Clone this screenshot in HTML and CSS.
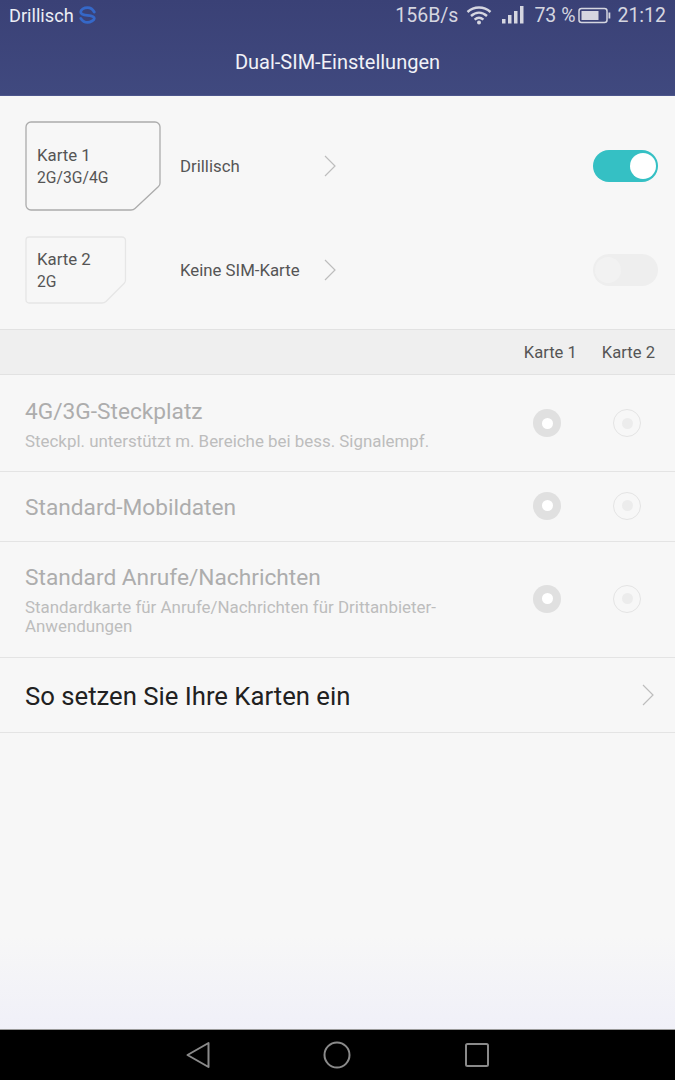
FILE: index.html
```html
<!DOCTYPE html>
<html lang="de">
<head>
<meta charset="utf-8">
<title>Dual-SIM-Einstellungen</title>
<link rel="stylesheet" href="styles.css">
</head>
<body>
<div class="screen">
  <header class="appbar">
    <div class="status">
      <div class="status-left">
        <span class="carrier">Drillisch</span>
        <svg class="s-logo" width="17" height="18" viewBox="0 0 17 18"><path d="M15.200 6 C13.800 3.200 11 1.600 8.500 1.600 C5 1.600 1.700 3.400 1.700 6 C1.700 8.500 5 9 8.500 9.400 C12 9.800 15.300 10.200 15.300 12.400 C15.300 14 11.500 16.400 8.500 16.400 C6 16.400 3.500 15 1.800 12.400" fill="none" stroke="#3568c8" stroke-width="2.800" stroke-linecap="round" stroke-linejoin="round"/></svg>
      </div>
      <div class="status-right">
        <span class="speed">156B/s</span>
        <svg class="wifi" width="26" height="20" viewBox="0 0 26 20"><g fill="none" stroke="#d5d6e0" stroke-width="2.400"><path d="M1.500 7 C8 1 18 1 24.500 7"/><path d="M5 11 C10 6.500 16 6.500 21 11"/><path d="M8.600 14.600 C11.500 12 14.500 12 17.400 14.600"/></g><circle cx="13" cy="17.500" r="2" fill="#d5d6e0"/></svg>
        <svg class="signal" width="22" height="18" viewBox="0 0 22 18"><g fill="#d5d6e0"><rect x="0" y="13" width="3.500" height="4.500"/><rect x="6" y="9" width="3.500" height="8.500"/><rect x="12" y="5" width="3.500" height="12.500"/><rect x="18" y="0" width="3.500" height="17.500"/></g></svg>
        <span class="pct">73 %</span>
        <svg class="battery" width="33" height="17" viewBox="0 0 33 17"><rect x="1" y="1.500" width="28" height="14" rx="2.500" fill="none" stroke="#d5d6e0" stroke-width="1.500"/><rect x="3.500" y="4" width="17" height="9" fill="#d5d6e0"/><rect x="30.500" y="5.500" width="1.800" height="6" fill="#d5d6e0"/></svg>
        <span class="time">21:12</span>
      </div>
    </div>
    <h1 class="title">Dual-SIM-Einstellungen</h1>
  </header>

  <main class="content">
    <section class="sims">
      <div class="sim-row sim-row-first">
        <div class="sim-slot">
          <svg class="sim-shape" width="136" height="90" viewBox="0 0 136 90"><path d="M6 1 H130 A5 5 0 0 1 135 6 V62 Q135 64 133.500 65.500 L110 87.500 Q108.500 89 106 89 H6 A5 5 0 0 1 1 84 V6 A5 5 0 0 1 6 1 Z" fill="none" stroke="#acacac" stroke-width="1.300"/></svg>
          <div class="sim-text"><div class="sim-name">Karte 1</div><div class="sim-net">2G/3G/4G</div></div>
        </div>
        <span class="sim-carrier">Drillisch</span>
        <svg class="chev" width="14" height="22" viewBox="0 0 14 22"><path d="M2 1 L12 11 L2 21" fill="none" stroke="#bdbdbd" stroke-width="1.200"/></svg>
        <div class="toggle toggle-on"><span class="knob"></span></div>
      </div>
      <div class="sim-row sim-row-second">
        <div class="sim-slot">
          <svg class="sim-shape" width="102" height="68" viewBox="0 0 102 68"><path d="M4 1 H97 A3.500 3.500 0 0 1 100.500 4.500 V44 Q100.500 46 99 47.500 L81 65.500 Q79.500 67 77 67 H4 A3 3 0 0 1 1 64 V4 A3 3 0 0 1 4 1 Z" fill="none" stroke="#e6e6e6" stroke-width="1.300"/></svg>
          <div class="sim-text"><div class="sim-name">Karte 2</div><div class="sim-net">2G</div></div>
        </div>
        <span class="sim-carrier">Keine SIM-Karte</span>
        <svg class="chev" width="14" height="22" viewBox="0 0 14 22"><path d="M2 1 L12 11 L2 21" fill="none" stroke="#bdbdbd" stroke-width="1.200"/></svg>
        <div class="toggle toggle-off"><span class="knob"></span></div>
      </div>
    </section>

    <div class="band"><span class="band-k1">Karte 1</span><span class="band-k2">Karte 2</span></div>

    <div class="row row-a">
      <div class="row-text">
        <div class="row-title">4G/3G-Steckplatz</div>
        <div class="row-sub">Steckpl. unterstützt m. Bereiche bei bess. Signalempf.</div>
      </div>
      <span class="radio radio-on"></span><span class="radio radio-off"></span>
    </div>
    <div class="row row-b">
      <div class="row-text"><div class="row-title">Standard-Mobildaten</div></div>
      <span class="radio radio-on"></span><span class="radio radio-off"></span>
    </div>
    <div class="row row-c">
      <div class="row-text">
        <div class="row-title">Standard Anrufe/Nachrichten</div>
        <div class="row-sub">Standardkarte für Anrufe/Nachrichten für Drittanbieter-<br>Anwendungen</div>
      </div>
      <span class="radio radio-on"></span><span class="radio radio-off"></span>
    </div>
    <div class="row row-d">
      <div class="row-link">So setzen Sie Ihre Karten ein</div>
      <svg class="chev-end" width="14" height="22" viewBox="0 0 14 22"><path d="M2 1 L12 11 L2 21" fill="none" stroke="#bdbdbd" stroke-width="1.200"/></svg>
    </div>
  </main>

  <nav class="navbar">
    <svg width="24" height="28" viewBox="0 0 24 28"><path d="M22.500 2 V26 L1.500 14 Z" fill="none" stroke="#8a8a8a" stroke-width="2" stroke-linejoin="round"/></svg>
    <svg width="28" height="28" viewBox="0 0 28 28"><circle cx="14" cy="14" r="12.500" fill="none" stroke="#8a8a8a" stroke-width="2"/></svg>
    <svg width="26" height="26" viewBox="0 0 26 26"><rect x="2" y="2" width="22" height="22" rx="1.500" fill="none" stroke="#8a8a8a" stroke-width="2"/></svg>
  </nav>
</div>
</body>
</html>
```
FILE: styles.css
```css
* { box-sizing: border-box; }
html, body { margin: 0; padding: 0; }
body { font-family: Roboto, "Noto Sans", sans-serif; background: #f7f7f7; }
.screen { width: 675px; height: 1080px; display: flex; flex-direction: column; overflow: hidden; }

.appbar { height: 96px; flex: none; background: linear-gradient(#3a4176, #40497f); border-bottom: 1px solid #4d568c; }
.status { height: 30px; display: flex; justify-content: space-between; align-items: center; padding: 0 9px; }
.status-left { display: flex; align-items: center; gap: 5px; }
.carrier { font-size: 18.200px; color: #eceef5; }
.status-right { display: flex; align-items: center; color: #d5d6e0; font-size: 19.500px; }
.speed { margin-right: 8px; }
.wifi { margin-right: 10px; }
.signal { margin-right: 10px; }
.pct { margin-right: 3px; }
.battery { margin-right: 6px; }
.title { margin: 0; height: 65px; padding-bottom: 1px; display: flex; align-items: center; justify-content: center; font-size: 20px; font-weight: 400; color: #f1f2f7; }

.content { flex: 1; background: linear-gradient(#f7f7f7 0, #f7f7f7 840px, #f0f0f8 934px); }

.sims { height: 233px; padding: 25px 17px 0 25px; display: flex; flex-direction: column; gap: 25px; }
.sim-row { display: flex; align-items: center; }
.sim-row-first { height: 90px; }
.sim-row-second { height: 68px; }
.sim-slot { width: 155px; height: 100%; flex: none; position: relative; display: flex; align-items: center; padding-left: 12px; }
.sim-shape { position: absolute; left: 0; top: 0; }
.sim-name { font-size: 16.800px; line-height: 23px; color: #555; }
.sim-net { font-size: 15.700px; line-height: 22px; color: #555; }
.sim-carrier { width: 143px; flex: none; font-size: 16.800px; color: #555; }
.chev { flex: none; margin-right: auto; }
.toggle { width: 65px; height: 32px; border-radius: 16px; position: relative; flex: none; }
.toggle-on { background: #35c0c4; }
.toggle-off { background: #eeeeee; }
.knob { position: absolute; top: 3px; width: 26px; height: 26px; border-radius: 50%; }
.toggle-on .knob { right: 2px; background: #fff; }
.toggle-off .knob { left: 2px; background: #f2f2f2; }

.band { height: 46px; background: #efefef; border-top: 1px solid #e2e2e2; border-bottom: 1px solid #e2e2e2; display: flex; align-items: center; justify-content: flex-end; font-size: 16.600px; color: #555; padding: 1px 20px 0 0; }
.band-k1 { margin-right: 25px; }

.row { display: flex; align-items: center; padding: 0 34px 0 25px; border-bottom: 1px solid #e4e4e4; }
.row-a { height: 97px; }
.row-b { height: 70px; padding-bottom: 2px; }
.row-c { height: 116px; padding-bottom: 2px; }
.row-d { height: 75px; padding-right: 20px; }
.row-text { flex: 1; min-width: 0; padding-top: 1px; }
.row-a .row-text { padding-top: 2px; }
.row-b .row-text { padding-top: 5px; }
.row-c .row-text { padding-top: 3px; }
.row-title { font-size: 22.700px; line-height: 28px; color: #adadad; }
.row-sub { font-size: 16.900px; line-height: 19px; color: #bdbdbd; margin-top: 6px; }
.row-link { flex: 1; font-size: 25.700px; color: #212121; padding-top: 1px; }
.chev-end { flex: none; }
.radio { width: 28px; height: 28px; border-radius: 50%; flex: none; display: flex; align-items: center; justify-content: center; }
.radio::after { content: ""; border-radius: 50%; }
.radio-on { background: #e0e0e0; margin-right: 52px; }
.radio-on::after { width: 11px; height: 11px; background: #fff; }
.radio-off { border: 1px solid #e4e4e4; }
.radio-off::after { width: 11px; height: 11px; background: #ececec; }

.navbar { height: 51px; flex: none; background: #000; border-top: 1px solid #9a9a9a; display: flex; align-items: center; justify-content: center; gap: 113px; }
```
